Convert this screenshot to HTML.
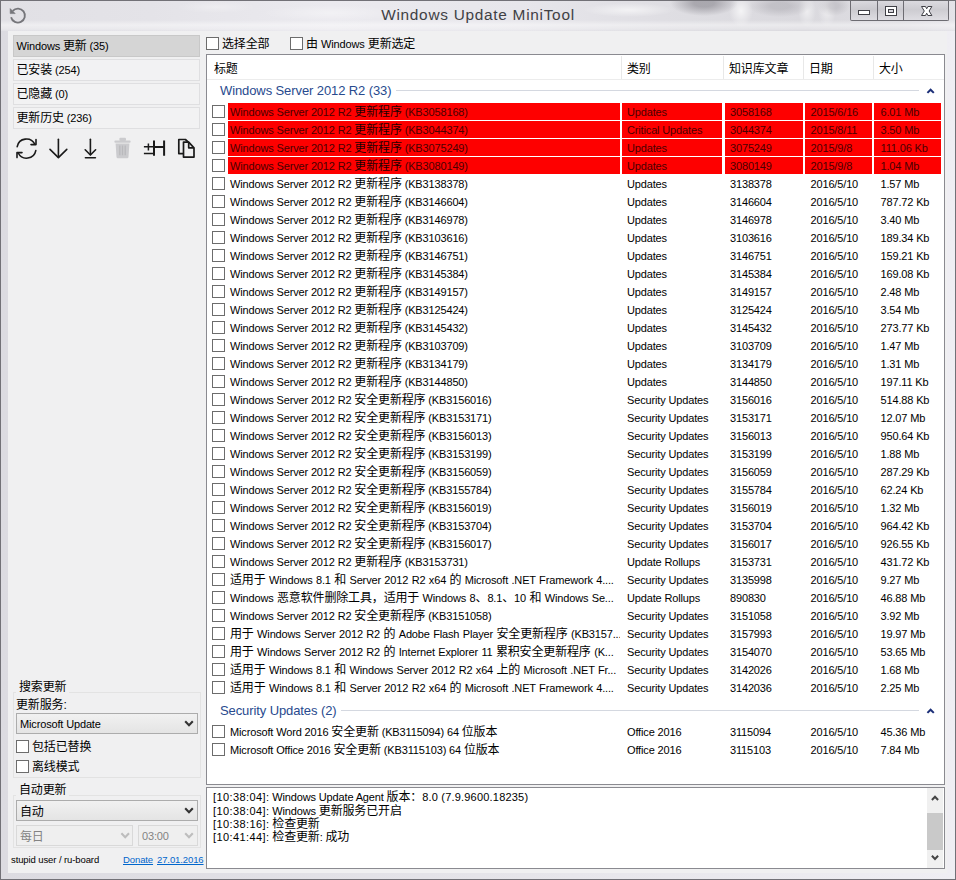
<!DOCTYPE html>
<html lang="zh-CN">
<head>
<meta charset="utf-8">
<title>Windows Update MiniTool</title>
<style>
html,body{margin:0;padding:0}
body{width:956px;height:880px;overflow:hidden;position:relative;background:#e8e7ed;
 font-family:"Liberation Sans","Noto Sans CJK SC",sans-serif;font-size:11px;color:#000;letter-spacing:-0.15px}
*{box-sizing:border-box}
.abs{position:absolute}
#frame{position:absolute;left:0;top:0;width:956px;height:880px;border:1px solid #727177;background:linear-gradient(90deg,#dcdbe1,#e5e4e9 50%,#efeef3)}
#tbar{position:absolute;left:1px;top:1px;width:954px;height:30px;
 background:
  linear-gradient(rgba(255,255,255,0) 19px,rgba(255,255,255,.45) 24px,rgba(255,255,255,.25) 28px,rgba(255,255,255,0) 30px),
  radial-gradient(ellipse 34px 13px at 703px 2px,rgba(135,133,141,.6) 30%,rgba(135,133,141,0) 100%),
  radial-gradient(ellipse 32px 11px at 779px 5px,rgba(150,148,156,.36) 30%,rgba(150,148,156,0) 100%),
  radial-gradient(ellipse 16px 10px at 833px 5px,rgba(150,148,156,.3) 30%,rgba(150,148,156,0) 100%),
  radial-gradient(ellipse 30px 8px at 880px 6px,rgba(150,148,156,.25),rgba(150,148,156,0) 100%),
  radial-gradient(ellipse 12px 16px at 740px 10px,rgba(255,255,255,.7),rgba(255,255,255,0) 100%),
  radial-gradient(ellipse 9px 16px at 806px 10px,rgba(255,255,255,.55),rgba(255,255,255,0) 100%),
  radial-gradient(ellipse 9px 16px at 826px 10px,rgba(255,255,255,.5),rgba(255,255,255,0) 100%),
  radial-gradient(ellipse 46px 7px at 628px 9px,rgba(255,255,255,.6),rgba(255,255,255,0) 100%),
  radial-gradient(ellipse 70px 8px at 330px 12px,rgba(255,255,255,.35),rgba(255,255,255,0) 100%),
  radial-gradient(ellipse 40px 6px at 215px 6px,rgba(255,255,255,.3),rgba(255,255,255,0) 100%),
  linear-gradient(90deg,#e1e0e5 0,#e4e3e8 150px,#ebeaef 330px,#e7e6eb 520px,#dfdee3 660px,#dad9de 800px,#dddce1 900px,#e4e3e8 954px)}
#client{position:absolute;left:8px;top:31px;width:939px;height:842px;background:#f0f0f1}
#title{position:absolute;left:0;top:4.4px;width:956px;text-align:center;font-size:15.4px;letter-spacing:.72px;color:#404044;line-height:22px}
.capbtn{position:absolute;top:0;height:21px;border:1px solid #6d6c72;border-top-color:#6a6a6e;background:linear-gradient(rgba(218,217,222,.8),rgba(200,199,204,.8) 45%,rgba(222,221,226,.8))}
.tab{position:absolute;left:13px;width:187px;height:22px;border:1px solid #dfdfe1;background:#f2f2f3;line-height:20px;padding-left:2.5px;font-size:11px}
.tab.sel{background:#d5d5d5;border-color:#c8c8c8}
.cjk{font-size:12px}
.cb{position:absolute;width:13px;height:13px;border:1px solid #6c6c6c;background:#fff;display:block}
#list{position:absolute;left:206px;top:54px;width:739px;height:731px;background:#fff;border:1px solid #8a8a90}
#log{position:absolute;left:206px;top:787px;width:739px;height:82px;background:#fff;border:1px solid #8a8a90}
.row{position:absolute;left:206px;width:739px;height:17px;line-height:17px;white-space:nowrap}
.row .cb{left:6px;top:2px}
.row span{position:absolute;top:0;height:17px;overflow:hidden;line-height:19px}
.row .c1{left:22px;width:392px;padding-left:2px}
.row .c2{left:416px;width:100px;padding-left:5px}
.row .c3{left:519px;width:78px;padding-left:5px}
.row .c4{left:599px;width:67px;padding-left:5.5px}
.row .c5{left:668px;width:67px;padding-left:6.5px}
.row b{font-weight:normal;font-size:12px}
.row.red span{background:#fe0000;color:#4a0000}
.row.red b{color:#1e0000}
.hd{position:absolute;top:61px;font-size:12px;line-height:16px}
.hsep{position:absolute;top:56px;width:1px;height:23px;background:#e8e8e8}
.grp{position:absolute;left:220px;font-size:13px;letter-spacing:-0.1px;color:#284a8e;line-height:16px;white-space:nowrap}
.gline{position:absolute;height:1px;background:#d4d8e0}
.sel{ }
.combo{position:absolute;height:21px;border:1px solid #acacac;background:linear-gradient(#f1f1f1,#e4e4e4);line-height:21px;padding-left:3px;white-space:nowrap}
.combo.dis{border-color:#d9d9d9;background:#efefef;color:#838383}
.gb{position:absolute;border:1px solid #e3e3e3}
.combo .cjk{position:relative;top:0.5px}
.lbl{position:absolute;white-space:nowrap;line-height:16px;font-size:12px}
.ts{letter-spacing:0.4px}
.nm{letter-spacing:0.2px}
.wide .c1{word-spacing:0.5px}
.logl{position:absolute;left:213px;white-space:nowrap;line-height:13px;font-size:11px}
a.lnk{position:absolute;color:#0066cc;text-decoration:underline;font-size:9.5px;top:853px;line-height:13px;letter-spacing:-0.1px}
svg{position:absolute;overflow:visible}
</style>
</head>
<body>
<div id="frame"></div>
<div id="tbar"></div>
<div id="title">Windows Update MiniTool</div>

<!-- caption buttons -->
<div class="capbtn" style="left:850px;width:28px;border-radius:0 0 0 2px"></div>
<div class="capbtn" style="left:877px;width:27px"></div>
<div class="capbtn" style="left:903px;width:46px;border-radius:0 0 2px 0"></div>
<svg style="left:850px;top:0" width="99" height="20" viewBox="0 0 99 20">
 <rect x="8.5" y="10.5" width="11" height="4" fill="#fff" stroke="#404046" stroke-width="1"/>
 <rect x="35.5" y="6.5" width="11" height="9" fill="#fff" stroke="#404046" stroke-width="1"/>
 <rect x="38.5" y="9.5" width="5" height="3" fill="#d6d5db" stroke="#404046" stroke-width="1"/>
 <path d="M71.5 6.5H75.5L76.7 8.8L77.9 6.5H81.9L79.1 11L81.9 15.5H77.9L76.7 13.2L75.5 15.5H71.5L74.3 11Z" fill="#fff" stroke="#404046" stroke-width="1" stroke-linejoin="miter"/>
</svg>

<!-- app icon (undo arrow) -->
<svg style="left:9px;top:6px" width="18" height="18" viewBox="0 0 18 18">
 <path d="M3.7 4.9A7 7 0 1 1 2.1 11.2" fill="none" stroke="#75757a" stroke-width="1.8" stroke-linecap="butt"/>
 <path d="M1.2 2.6V7.6H6.2Z" fill="#75757a" stroke="#75757a" stroke-width="0.6" stroke-linejoin="round"/>
</svg>

<div id="client"></div>

<!-- left tabs -->
<div class="tab sel" style="top:35px">Windows <span class="cjk">更新</span> (35)</div>
<div class="tab" style="top:59px"><span class="cjk">已安装</span> (254)</div>
<div class="tab" style="top:83px"><span class="cjk">已隐藏</span> (0)</div>
<div class="tab" style="top:107px"><span class="cjk">更新历史</span> (236)</div>

<!-- toolbar icons -->
<svg style="left:14px;top:136px" width="190" height="28" viewBox="0 0 190 28">
 <g fill="none" stroke="#1a1a1a" stroke-width="1.6" stroke-linecap="round" stroke-linejoin="round">
  <!-- refresh -->
  <path d="M3.2 10.6A9.4 9.4 0 0 1 20.8 8.2"/>
  <path d="M22 3.6V8.6H17"/>
  <path d="M21.8 14.6A9.4 9.4 0 0 1 4.2 17"/>
  <path d="M3 21.6V16.6H8"/>
  <!-- arrow down -->
  <path d="M44.4 3.2V21.2"/>
  <path d="M36 13.4L44.4 21.6L52.8 13.4"/>
  <!-- download -->
  <path d="M76.4 3.2V18.6"/>
  <path d="M71.2 13.8L76.4 19L81.6 13.8"/>
  <path d="M71.4 21.7H81.4"/>
 </g>
 <!-- trash (disabled) -->
 <g fill="#cbcbce" stroke="none">
  <rect x="100.4" y="4.4" width="16.2" height="2.4" rx="1"/>
  <rect x="105.4" y="1.8" width="6.6" height="3.2" rx="1"/>
  <path d="M101.6 7.6h13.8l-0.9 13.4a1.4 1.4 0 0 1-1.4 1.2h-9.2a1.4 1.4 0 0 1-1.4-1.2z"/>
 </g>
 <g stroke="#b9b9bc" stroke-width="1.3"><path d="M105.8 9.6v9.6M108.5 9.6v9.6M111.2 9.6v9.6"/></g>
 <!-- +-H -->
 <g fill="none" stroke="#1a1a1a" stroke-width="1.5" stroke-linecap="butt">
  <path d="M129.9 10.8h9.2M134.4 7.4v7M129.9 17.5h9.4"/>
  <path d="M140 4.5V19.7M150.1 4.5V19.7M140 11H150.1" stroke-width="2"/>
 </g>
 <!-- copy -->
 <g fill="#f0f0f1" stroke="#1a1a1a" stroke-width="1.7" stroke-linejoin="round">
  <path d="M169 17.6H164.8V3.5H171.4L174.6 6.4"/>
  <path d="M169.5 6.1H174.7L180 11.8V21.1H169.5Z"/>
  <path d="M174.7 6.1V11.8H180" fill="none"/>
 </g>
</svg>

<!-- search group -->
<div class="gb" style="left:13px;top:692px;width:188px;height:86px;border-bottom-color:#e2e2e2"></div>
<div class="lbl" style="left:16px;top:679px;background:#f0f0f1;padding:0 3px">搜索更新</div>
<div class="lbl" style="left:16px;top:697px">更新服务:</div>
<div class="combo" style="left:16px;top:713px;width:182px">Microsoft Update</div>
<i class="cb" style="left:16px;top:740px"></i><div class="lbl" style="left:32px;top:739px">包括已替换</div>
<i class="cb" style="left:16px;top:760px"></i><div class="lbl" style="left:32px;top:759px">离线模式</div>

<!-- auto update group -->
<div class="gb" style="left:13px;top:795px;width:188px;height:53px"></div>
<div class="lbl" style="left:16px;top:782px;background:#f0f0f1;padding:0 3px">自动更新</div>
<div class="combo" style="left:16px;top:800px;width:182px"><span class="cjk">自动</span></div>
<div class="combo dis" style="left:16px;top:825px;width:117px"><span class="cjk">每日</span></div>
<div class="combo dis" style="left:138px;top:825px;width:60px">03:00</div>
<svg style="left:0;top:0" width="210" height="880" viewBox="0 0 210 880">
 <g fill="none" stroke-width="2.1" stroke-linecap="butt">
  <path d="M185.2 721.3l3.8 4 3.8-4" stroke="#333"/>
  <path d="M185.2 808.3l3.8 4 3.8-4" stroke="#333"/>
  <path d="M121.4 833.3l3.8 4 3.8-4" stroke="#bdbdbd"/>
  <path d="M185.2 833.3l3.8 4 3.8-4" stroke="#bdbdbd"/>
 </g>
</svg>

<div class="lbl" style="left:11px;top:853px;font-size:9.5px;line-height:13px;letter-spacing:-0.1px">stupid user / ru-board</div>
<a class="lnk" style="left:123px">Donate</a>
<a class="lnk" style="left:157px">27.01.2016</a>

<!-- top checkboxes -->
<i class="cb" style="left:206px;top:37px"></i><div class="lbl" style="left:222px;top:36px">选择全部</div>
<i class="cb" style="left:290px;top:37px"></i><div class="lbl" style="left:306px;top:36px">由 <span style="font-size:11px">Windows</span> 更新选定</div>

<!-- list view -->
<div id="list"></div>
<div class="hd" style="left:214px">标题</div>
<div class="hd" style="left:627px">类别</div>
<div class="hd" style="left:729px">知识库文章</div>
<div class="hd" style="left:809px">日期</div>
<div class="hd" style="left:879px">大小</div>
<div class="hsep" style="left:621px"></div>
<div class="hsep" style="left:723px"></div>
<div class="hsep" style="left:803px"></div>
<div class="hsep" style="left:873px"></div>
<div class="gline" style="left:207px;top:79px;width:737px;background:#ececec"></div>

<div class="grp" style="top:83px">Windows Server 2012 R2 (33)</div>
<div class="gline" style="left:396px;top:90px;width:523px"></div>
<div class="grp" style="top:703px">Security Updates (2)</div>
<div class="gline" style="left:341px;top:710px;width:578px"></div>
<svg style="left:925px;top:85px" width="12" height="640" viewBox="0 0 12 640">
 <path d="M2.4 7.9L5.6 4.7l3.2 3.2" fill="none" stroke="#1c2f78" stroke-width="2"/>
 <path d="M2.4 627.9L5.6 624.7l3.2 3.2" fill="none" stroke="#1c2f78" stroke-width="2"/>
</svg>

<div class="row red" style="top:103px"><i class="cb"></i><span class="c1">Windows Server 2012 R2 <b>更新程序</b> (KB3058168)</span><span class="c2">Updates</span><span class="c3">3058168</span><span class="c4">2015/6/16</span><span class="c5">6.01 Mb</span></div>
<div class="row red" style="top:121px"><i class="cb"></i><span class="c1">Windows Server 2012 R2 <b>更新程序</b> (KB3044374)</span><span class="c2">Critical Updates</span><span class="c3">3044374</span><span class="c4">2015/8/11</span><span class="c5">3.50 Mb</span></div>
<div class="row red" style="top:139px"><i class="cb"></i><span class="c1">Windows Server 2012 R2 <b>更新程序</b> (KB3075249)</span><span class="c2">Updates</span><span class="c3">3075249</span><span class="c4">2015/9/8</span><span class="c5">111.06 Kb</span></div>
<div class="row red" style="top:157px"><i class="cb"></i><span class="c1">Windows Server 2012 R2 <b>更新程序</b> (KB3080149)</span><span class="c2">Updates</span><span class="c3">3080149</span><span class="c4">2015/9/8</span><span class="c5">1.04 Mb</span></div>
<div class="row" style="top:175px"><i class="cb"></i><span class="c1">Windows Server 2012 R2 <b>更新程序</b> (KB3138378)</span><span class="c2">Updates</span><span class="c3">3138378</span><span class="c4">2016/5/10</span><span class="c5">1.57 Mb</span></div>
<div class="row" style="top:193px"><i class="cb"></i><span class="c1">Windows Server 2012 R2 <b>更新程序</b> (KB3146604)</span><span class="c2">Updates</span><span class="c3">3146604</span><span class="c4">2016/5/10</span><span class="c5">787.72 Kb</span></div>
<div class="row" style="top:211px"><i class="cb"></i><span class="c1">Windows Server 2012 R2 <b>更新程序</b> (KB3146978)</span><span class="c2">Updates</span><span class="c3">3146978</span><span class="c4">2016/5/10</span><span class="c5">3.40 Mb</span></div>
<div class="row" style="top:229px"><i class="cb"></i><span class="c1">Windows Server 2012 R2 <b>更新程序</b> (KB3103616)</span><span class="c2">Updates</span><span class="c3">3103616</span><span class="c4">2016/5/10</span><span class="c5">189.34 Kb</span></div>
<div class="row" style="top:247px"><i class="cb"></i><span class="c1">Windows Server 2012 R2 <b>更新程序</b> (KB3146751)</span><span class="c2">Updates</span><span class="c3">3146751</span><span class="c4">2016/5/10</span><span class="c5">159.21 Kb</span></div>
<div class="row" style="top:265px"><i class="cb"></i><span class="c1">Windows Server 2012 R2 <b>更新程序</b> (KB3145384)</span><span class="c2">Updates</span><span class="c3">3145384</span><span class="c4">2016/5/10</span><span class="c5">169.08 Kb</span></div>
<div class="row" style="top:283px"><i class="cb"></i><span class="c1">Windows Server 2012 R2 <b>更新程序</b> (KB3149157)</span><span class="c2">Updates</span><span class="c3">3149157</span><span class="c4">2016/5/10</span><span class="c5">2.48 Mb</span></div>
<div class="row" style="top:301px"><i class="cb"></i><span class="c1">Windows Server 2012 R2 <b>更新程序</b> (KB3125424)</span><span class="c2">Updates</span><span class="c3">3125424</span><span class="c4">2016/5/10</span><span class="c5">3.54 Mb</span></div>
<div class="row" style="top:319px"><i class="cb"></i><span class="c1">Windows Server 2012 R2 <b>更新程序</b> (KB3145432)</span><span class="c2">Updates</span><span class="c3">3145432</span><span class="c4">2016/5/10</span><span class="c5">273.77 Kb</span></div>
<div class="row" style="top:337px"><i class="cb"></i><span class="c1">Windows Server 2012 R2 <b>更新程序</b> (KB3103709)</span><span class="c2">Updates</span><span class="c3">3103709</span><span class="c4">2016/5/10</span><span class="c5">1.47 Mb</span></div>
<div class="row" style="top:355px"><i class="cb"></i><span class="c1">Windows Server 2012 R2 <b>更新程序</b> (KB3134179)</span><span class="c2">Updates</span><span class="c3">3134179</span><span class="c4">2016/5/10</span><span class="c5">1.31 Mb</span></div>
<div class="row" style="top:373px"><i class="cb"></i><span class="c1">Windows Server 2012 R2 <b>更新程序</b> (KB3144850)</span><span class="c2">Updates</span><span class="c3">3144850</span><span class="c4">2016/5/10</span><span class="c5">197.11 Kb</span></div>
<div class="row" style="top:391px"><i class="cb"></i><span class="c1">Windows Server 2012 R2 <b>安全更新程序</b> (KB3156016)</span><span class="c2">Security Updates</span><span class="c3">3156016</span><span class="c4">2016/5/10</span><span class="c5">514.88 Kb</span></div>
<div class="row" style="top:409px"><i class="cb"></i><span class="c1">Windows Server 2012 R2 <b>安全更新程序</b> (KB3153171)</span><span class="c2">Security Updates</span><span class="c3">3153171</span><span class="c4">2016/5/10</span><span class="c5">12.07 Mb</span></div>
<div class="row" style="top:427px"><i class="cb"></i><span class="c1">Windows Server 2012 R2 <b>安全更新程序</b> (KB3156013)</span><span class="c2">Security Updates</span><span class="c3">3156013</span><span class="c4">2016/5/10</span><span class="c5">950.64 Kb</span></div>
<div class="row" style="top:445px"><i class="cb"></i><span class="c1">Windows Server 2012 R2 <b>安全更新程序</b> (KB3153199)</span><span class="c2">Security Updates</span><span class="c3">3153199</span><span class="c4">2016/5/10</span><span class="c5">1.88 Mb</span></div>
<div class="row" style="top:463px"><i class="cb"></i><span class="c1">Windows Server 2012 R2 <b>安全更新程序</b> (KB3156059)</span><span class="c2">Security Updates</span><span class="c3">3156059</span><span class="c4">2016/5/10</span><span class="c5">287.29 Kb</span></div>
<div class="row" style="top:481px"><i class="cb"></i><span class="c1">Windows Server 2012 R2 <b>安全更新程序</b> (KB3155784)</span><span class="c2">Security Updates</span><span class="c3">3155784</span><span class="c4">2016/5/10</span><span class="c5">62.24 Kb</span></div>
<div class="row" style="top:499px"><i class="cb"></i><span class="c1">Windows Server 2012 R2 <b>安全更新程序</b> (KB3156019)</span><span class="c2">Security Updates</span><span class="c3">3156019</span><span class="c4">2016/5/10</span><span class="c5">1.32 Mb</span></div>
<div class="row" style="top:517px"><i class="cb"></i><span class="c1">Windows Server 2012 R2 <b>安全更新程序</b> (KB3153704)</span><span class="c2">Security Updates</span><span class="c3">3153704</span><span class="c4">2016/5/10</span><span class="c5">964.42 Kb</span></div>
<div class="row" style="top:535px"><i class="cb"></i><span class="c1">Windows Server 2012 R2 <b>安全更新程序</b> (KB3156017)</span><span class="c2">Security Updates</span><span class="c3">3156017</span><span class="c4">2016/5/10</span><span class="c5">926.55 Kb</span></div>
<div class="row" style="top:553px"><i class="cb"></i><span class="c1">Windows Server 2012 R2 <b>更新程序</b> (KB3153731)</span><span class="c2">Update Rollups</span><span class="c3">3153731</span><span class="c4">2016/5/10</span><span class="c5">431.72 Kb</span></div>
<div class="row wide" style="top:571px"><i class="cb"></i><span class="c1"><b>适用于</b> Windows 8.1 <b>和</b> Server 2012 R2 x64 <b>的</b> Microsoft .NET Framework 4....</span><span class="c2">Security Updates</span><span class="c3">3135998</span><span class="c4">2016/5/10</span><span class="c5">9.27 Mb</span></div>
<div class="row wide" style="top:589px"><i class="cb"></i><span class="c1">Windows <b>恶意软件删除工具，适用于</b> Windows 8<b>、</b>8.1<b>、</b>10 <b>和</b> Windows Se...</span><span class="c2">Update Rollups</span><span class="c3">890830</span><span class="c4">2016/5/10</span><span class="c5">46.88 Mb</span></div>
<div class="row" style="top:607px"><i class="cb"></i><span class="c1">Windows Server 2012 R2 <b>安全更新程序</b> (KB3151058)</span><span class="c2">Security Updates</span><span class="c3">3151058</span><span class="c4">2016/5/10</span><span class="c5">3.92 Mb</span></div>
<div class="row wide" style="top:625px"><i class="cb"></i><span class="c1"><b>用于</b> Windows Server 2012 R2 <b>的</b> Adobe Flash Player <b>安全更新程序</b> (KB3157...</span><span class="c2">Security Updates</span><span class="c3">3157993</span><span class="c4">2016/5/10</span><span class="c5">19.97 Mb</span></div>
<div class="row wide" style="top:643px"><i class="cb"></i><span class="c1"><b>用于</b> Windows Server 2012 R2 <b>的</b> Internet Explorer 11 <b>累积安全更新程序</b> (K...</span><span class="c2">Security Updates</span><span class="c3">3154070</span><span class="c4">2016/5/10</span><span class="c5">53.65 Mb</span></div>
<div class="row wide" style="top:661px"><i class="cb"></i><span class="c1"><b>适用于</b> Windows 8.1 <b>和</b> Windows Server 2012 R2 x64 <b>上的</b> Microsoft .NET Fr...</span><span class="c2">Security Updates</span><span class="c3">3142026</span><span class="c4">2016/5/10</span><span class="c5">1.68 Mb</span></div>
<div class="row wide" style="top:679px"><i class="cb"></i><span class="c1"><b>适用于</b> Windows 8.1 <b>和</b> Server 2012 R2 x64 <b>的</b> Microsoft .NET Framework 4....</span><span class="c2">Security Updates</span><span class="c3">3142036</span><span class="c4">2016/5/10</span><span class="c5">2.25 Mb</span></div>

<div class="row" style="top:723px"><i class="cb"></i><span class="c1">Microsoft Word 2016 <b>安全更新</b> (KB3115094) 64 <b>位版本</b></span><span class="c2">Office 2016</span><span class="c3">3115094</span><span class="c4">2016/5/10</span><span class="c5">45.36 Mb</span></div>
<div class="row" style="top:741px"><i class="cb"></i><span class="c1">Microsoft Office 2016 <b>安全更新</b> (KB3115103) 64 <b>位版本</b></span><span class="c2">Office 2016</span><span class="c3">3115103</span><span class="c4">2016/5/10</span><span class="c5">7.84 Mb</span></div>


<!-- log -->
<div id="log"></div>
<div class="logl" style="top:791px"><span class="ts">[10:38:04]:</span> Windows Update Agent <span class="cjk">版本：</span><span class="nm">8.0 (7.9.9600.18235)</span></div>
<div class="logl" style="top:804.5px"><span class="ts">[10:38:04]:</span> Windows <span class="cjk">更新服务已开启</span></div>
<div class="logl" style="top:817.5px"><span class="ts">[10:38:16]:</span> <span class="cjk">检查更新</span></div>
<div class="logl" style="top:830.5px"><span class="ts">[10:41:44]:</span> <span class="cjk">检查更新</span>: <span class="cjk">成功</span></div>
<div class="abs" style="left:927px;top:788px;width:16px;height:80px;background:#f0f0f0"></div>
<div class="abs" style="left:927px;top:813px;width:16px;height:37px;background:#c9c9c9"></div>
<svg style="left:927px;top:788px" width="17" height="80" viewBox="0 0 17 80">
 <path d="M4.9 12L8 8.8l3.1 3.2" fill="none" stroke="#444" stroke-width="2"/>
 <path d="M4.9 67.8L8 71l3.1-3.2" fill="none" stroke="#444" stroke-width="2"/>
</svg>
</body>
</html>
